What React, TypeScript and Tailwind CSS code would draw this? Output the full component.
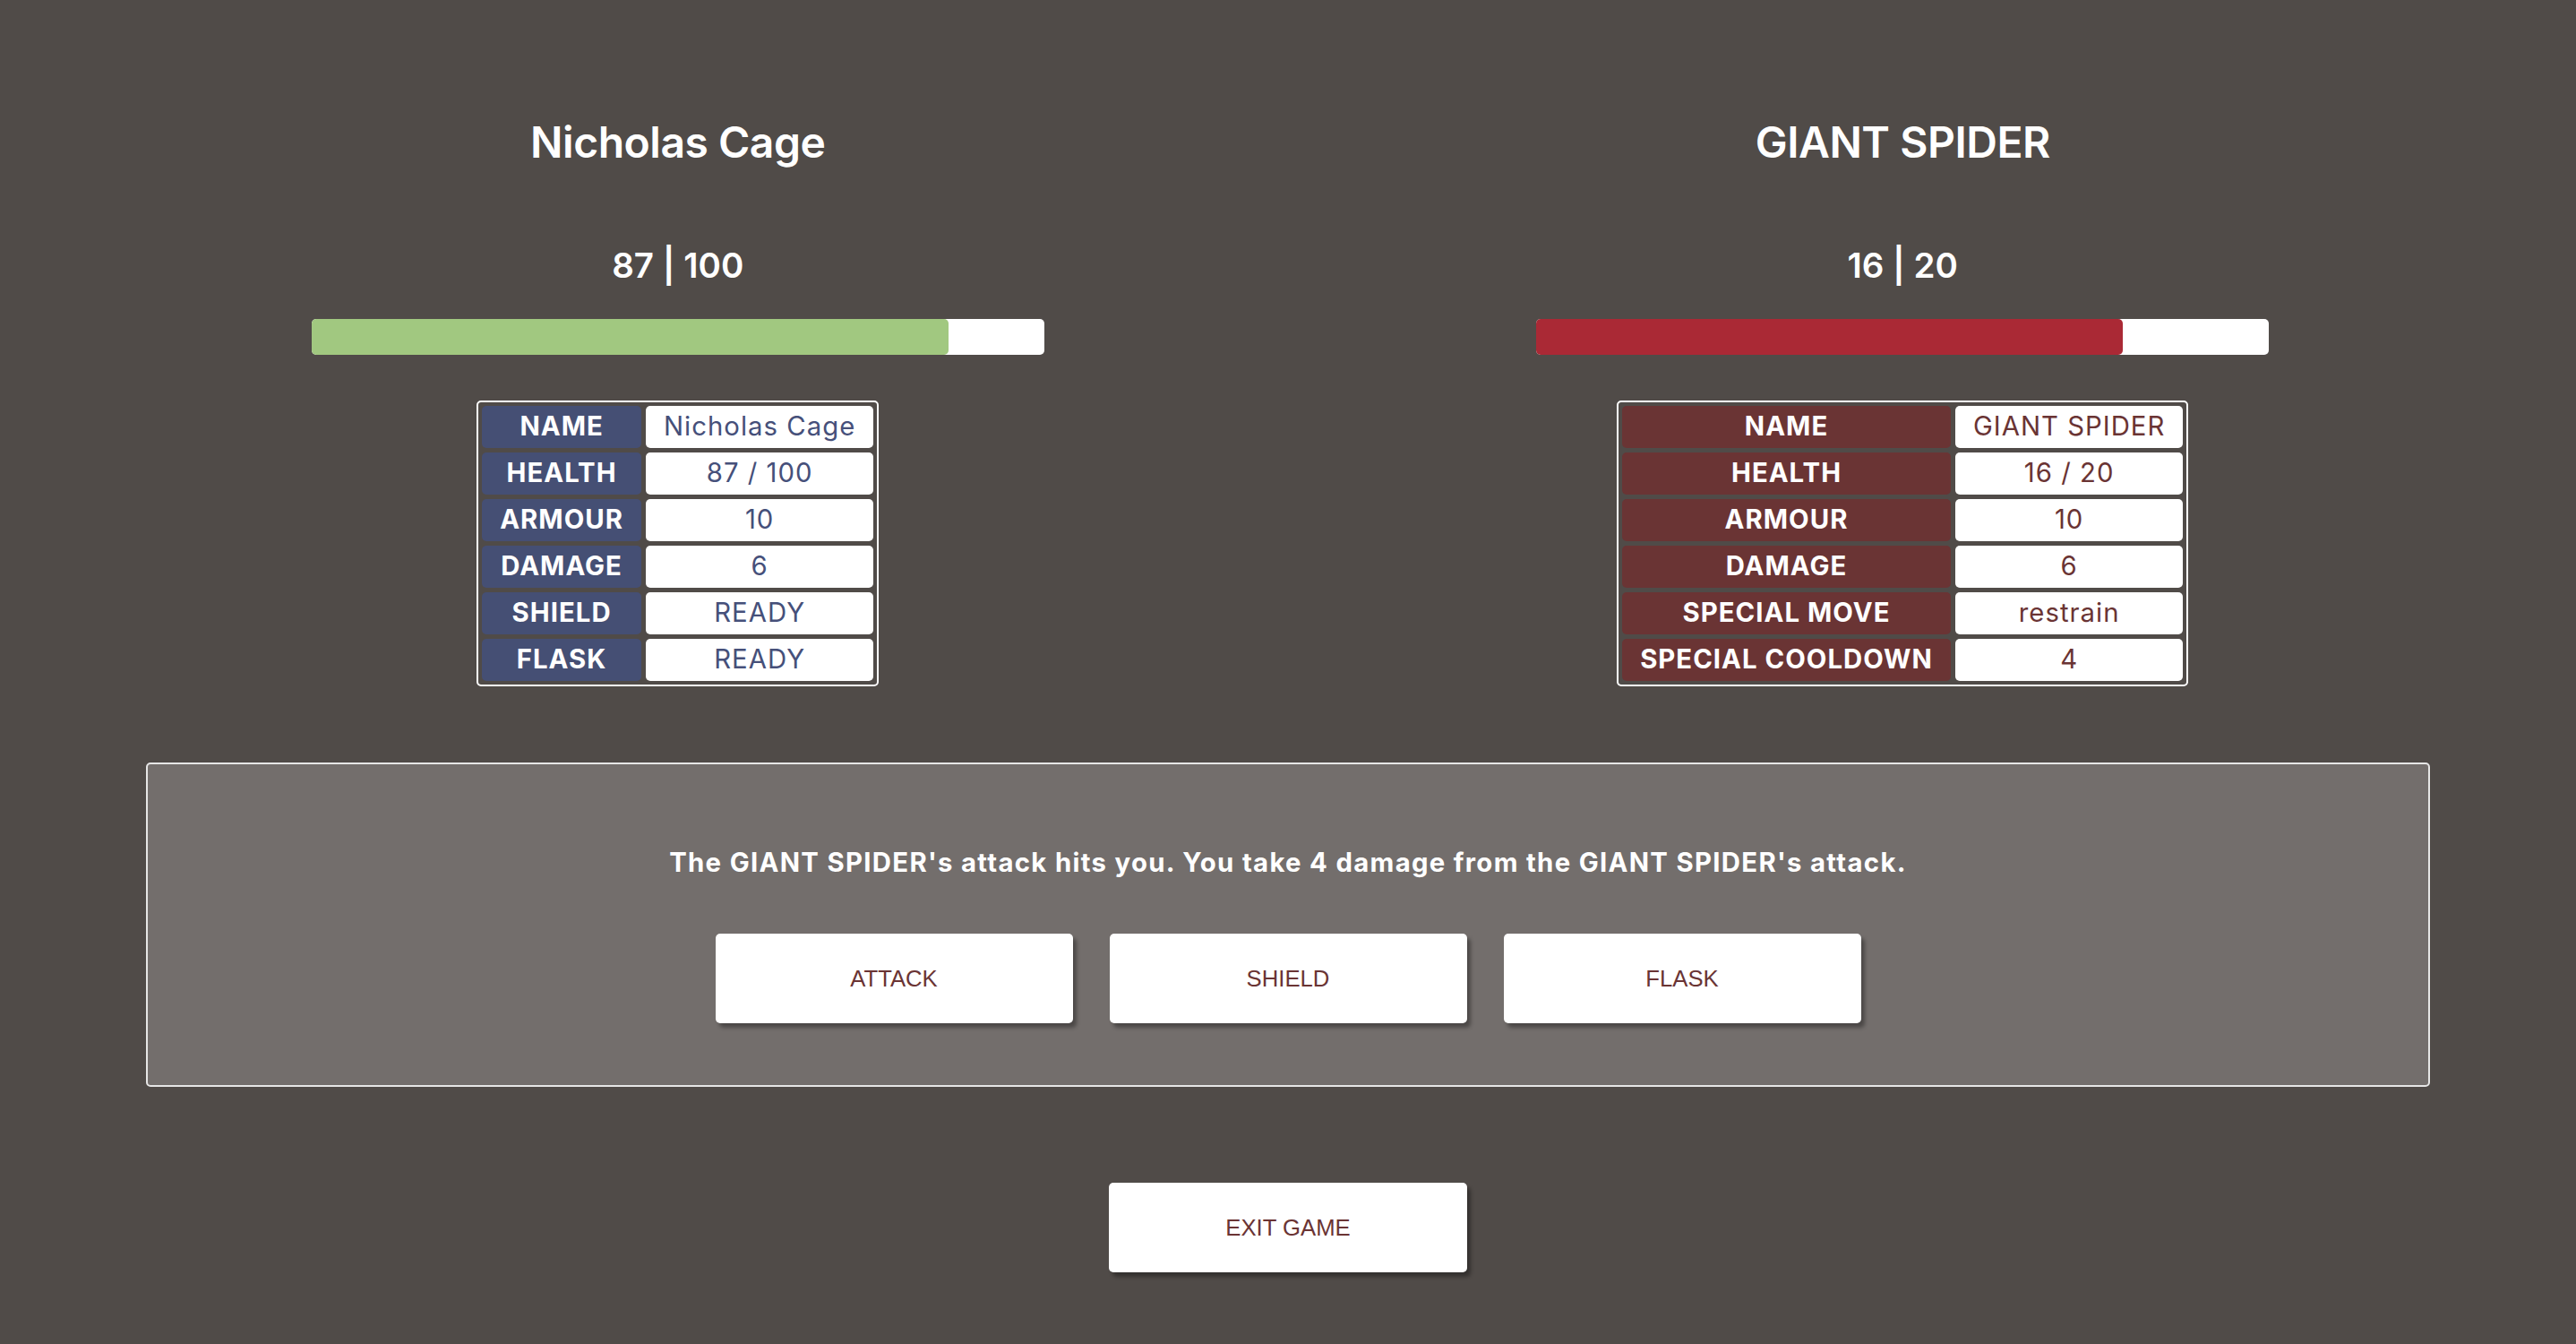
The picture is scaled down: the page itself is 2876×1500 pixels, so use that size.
import React from 'react';

type Stat = { label: string; value: string };

type Fighter = {
  name: string;
  hp: number;
  maxHp: number;
  tone: 'blue' | 'red';
  stats: Stat[];
};

const player: Fighter = {
  name: 'Nicholas Cage',
  hp: 87,
  maxHp: 100,
  tone: 'blue',
  stats: [
    { label: 'NAME', value: 'Nicholas Cage' },
    { label: 'HEALTH', value: '87 / 100' },
    { label: 'ARMOUR', value: '10' },
    { label: 'DAMAGE', value: '6' },
    { label: 'SHIELD', value: 'READY' },
    { label: 'FLASK', value: 'READY' },
  ],
};

const enemy: Fighter = {
  name: 'GIANT SPIDER',
  hp: 16,
  maxHp: 20,
  tone: 'red',
  stats: [
    { label: 'NAME', value: 'GIANT SPIDER' },
    { label: 'HEALTH', value: '16 / 20' },
    { label: 'ARMOUR', value: '10' },
    { label: 'DAMAGE', value: '6' },
    { label: 'SPECIAL MOVE', value: 'restrain' },
    { label: 'SPECIAL COOLDOWN', value: '4' },
  ],
};

function FighterPanel({ fighter }: { fighter: Fighter }) {
  const pct = (fighter.hp / fighter.maxHp) * 100;
  const blue = fighter.tone === 'blue';

  return (
    <div className="flex flex-col items-center">
      <h2 className="text-[48px] leading-[48px] font-semibold tracking-[-0.01em] text-white">{fighter.name}</h2>
      <p className="mt-[94px] text-[38.5px] leading-[38.5px] font-semibold text-white">
        {fighter.hp} | {fighter.maxHp}
      </p>

      {/* health bar */}
      <div className="mt-[40px] w-[818px] h-[40px] bg-white rounded-[5px]">
        <div
          className={`h-full rounded-[5px] ${blue ? 'bg-[#a1c880]' : 'bg-[#aa2935]'}`}
          style={{ width: `${pct}%` }}
        />
      </div>

      {/* stats table */}
      <div className="mt-[51px] grid grid-cols-[auto_auto] gap-[5px] p-[4px] border-2 border-white rounded-[5px]">
        {fighter.stats.map((s) => (
          <React.Fragment key={s.label}>
            <div
              className={`h-[47px] px-[20px] flex items-center justify-center rounded-[5px] text-[29.3px] tracking-[0.035em] font-bold text-white whitespace-nowrap ${
                blue ? 'bg-[#454f74]' : 'bg-[#6a3434]'
              }`}
            >
              {s.label}
            </div>
            <div
              className={`h-[47px] px-[20px] flex items-center justify-center rounded-[5px] bg-white text-[29.3px] tracking-[0.035em] whitespace-nowrap ${
                blue ? 'text-[#46507a]' : 'text-[#6a3434]'
              }`}
            >
              {s.value}
            </div>
          </React.Fragment>
        ))}
      </div>
    </div>
  );
}

function ActionButton({ label }: { label: string }) {
  return (
    <button className="w-[399px] h-[100px] bg-white rounded-[5px] shadow-[4px_5px_4px_rgba(0,0,0,0.35)] font-['Liberation_Sans',Arial,sans-serif] text-[25.7px] text-[#6a3434]">
      {label}
    </button>
  );
}

export default function App() {
  return (
    <div className="min-h-screen bg-[#504b48] font-['Inter','Noto_Sans',sans-serif] pb-[80px]">
      <div className="grid grid-cols-2 pl-[73px] pr-[68px] pt-[135px]">
        <FighterPanel fighter={player} />
        <FighterPanel fighter={enemy} />
      </div>

      {/* combat log + actions */}
      <div className="mx-auto mt-[85px] w-[2550px] border-2 border-[#e6e6e6] rounded-[5px] bg-[#736e6c] pt-[95px] pb-[69px] flex flex-col items-center">
        <p className="text-[29.3px] leading-[29.3px] font-bold tracking-[0.045em] text-white">
          The GIANT SPIDER's attack hits you. You take 4 damage from the GIANT SPIDER's attack.
        </p>
        <div className="mt-[65px] flex gap-[41px]">
          <ActionButton label="ATTACK" />
          <ActionButton label="SHIELD" />
          <ActionButton label="FLASK" />
        </div>
      </div>

      <div className="mt-[107px] flex justify-center">
        <button className="w-[400px] h-[100px] bg-white rounded-[5px] shadow-[4px_5px_4px_rgba(0,0,0,0.35)] font-['Liberation_Sans',Arial,sans-serif] text-[25.7px] text-[#6a3434]">
          EXIT GAME
        </button>
      </div>
    </div>
  );
}
